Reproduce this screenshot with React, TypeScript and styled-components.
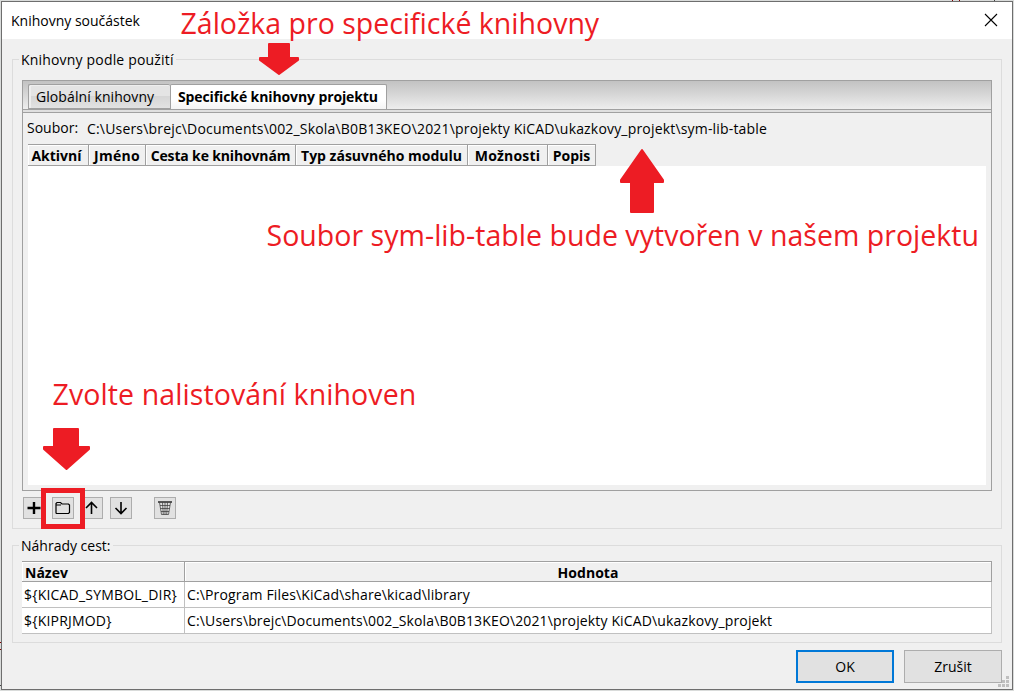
import React from "react";
import styled, { createGlobalStyle } from "styled-components";

const Global = createGlobalStyle`
  * { box-sizing: border-box; }
  body { margin: 0; background: #d9dbda; }
`;

const Desktop = styled.div`
  position: relative;
  width: 1014px;
  height: 691px;
  padding: 1px 1px 1px 1px;
  overflow: hidden;
  background: #d9dbda;
  font-family: "Open Sans", "Noto Sans", sans-serif;
  font-size: 14px;
  color: #000;
`;

const Dialog = styled.main`
  display: flex;
  flex-direction: column;
  width: 1012px;
  height: 689px;
  border: 1px solid #6e6e6e;
  background: #f0f0f0;
`;

const TitleBar = styled.header`
  display: flex;
  align-items: center;
  justify-content: space-between;
  flex: none;
  height: 37px;
  padding: 0 14px 0 9px;
  background: #fff;
`;

const Text = styled.span<{ $ls?: number }>`
  display: block;
  line-height: 20px;
  white-space: pre;
  letter-spacing: ${(p) => p.$ls ?? 0}px;
`;

const CloseButton = styled.button`
  display: flex;
  margin-top: -2px;
  padding: 0;
  border: 0;
  background: none;
`;

const Body = styled.div`
  display: flex;
  flex-direction: column;
  flex: 1;
  padding: 10px 10px 0;
`;

const Group = styled.fieldset<{ $height: number; $gap: number }>`
  flex: none;
  min-width: 0;
  height: ${(p) => p.$height}px;
  margin: 0 0 ${(p) => p.$gap}px;
  padding: ${(p) => (p.$gap ? 10 : 5)}px 9px 0;
  border: 1px solid #dcdcdc;
`;

const Legend = styled.legend`
  height: 21px;
  margin-left: -3px;
  padding: 1px 2px 0;
`;

const Notebook = styled.section`
  height: 411px;
  border: 1px solid #a0a0a0;
`;

const TabStrip = styled.div`
  display: flex;
  align-items: flex-end;
  height: 32px;
  padding: 0 0 3px 5px;
  border-bottom: 1px solid #a0a0a0;
  background: linear-gradient(#c2c2c2, #ededed 28px, #a0a0a0 28px, #a0a0a0 29px, #dfdfdf 29px);
`;

const Tab = styled.button<{ $active?: boolean; $width: number }>`
  width: ${(p) => p.$width}px;
  height: 25px;
  padding: 0 0 0 7px;
  border: 1px solid #a0a0a0;
  border-width: 1px ${(p) => (p.$active ? 1 : 0)}px ${(p) => (p.$active ? 0 : 1)}px 1px;
  border-radius: 2px 2px 0 0;
  background: ${(p) =>
    p.$active ? "linear-gradient(#fff 60%, #f4f4f4)" : "linear-gradient(#e4e4e4 50%, #d6d6d6 50%, #e2e2e2)"};
  box-shadow: ${(p) => (p.$active ? "none" : "inset 2px 1px 0 #eee")};
  font: inherit;
  font-weight: ${(p) => (p.$active ? 700 : 400)};
  text-align: left;
`;

const FileRow = styled.div`
  display: flex;
  height: 31px;
  padding: 5px 0 0 4px;
`;

const FileLabel = styled.div`
  width: 60px;
`;

const FilePath = styled.div`
  padding-top: 1px;
`;

const HeaderRow = styled.div`
  display: flex;
  height: 22px;
  margin: 0 5px;
`;

const HeaderCell = styled.div<{ $width: number; $trail?: number }>`
  display: flex;
  align-items: center;
  justify-content: center;
  width: ${(p) => p.$width}px;
  padding: 2px ${(p) => p.$trail ?? 0}px 0 0;
  border: 1px solid #a0a0a0;
  border-left: 0;
  box-shadow: inset 1px 1px 0 #fff;
  font-weight: 700;
`;

const GridArea = styled.div`
  height: 319px;
  margin: 0 5px;
  background: #fff;
`;

const Toolbar = styled.div`
  display: flex;
  gap: 7px;
  padding: 6px 0 0 1px;
`;

const ToolButton = styled.button<{ $after?: number }>`
  display: flex;
  width: 22px;
  height: 22px;
  margin: 0 ${(p) => p.$after ?? 0}px 0 0;
  padding: 0;
  border: 1px solid #adadad;
  background: #e1e1e1;
`;

const PathTable = styled.div`
  display: grid;
  grid-template-columns: 163px 807px;
  grid-template-rows: 20px 26px 26px;
  border-top: 1px solid #a0a0a0;
`;

const PathHead = styled.div<{ $center?: boolean }>`
  display: flex;
  align-items: center;
  justify-content: ${(p) => (p.$center ? "center" : "flex-start")};
  padding: ${(p) => (p.$center ? "3px 0 0" : "3px 0 0 3px")};
  border: solid #a0a0a0;
  border-width: 0 1px 1px 0;
  box-shadow: inset 1px 1px 0 #fff;
  font-weight: 700;
`;

const PathCell = styled.div`
  display: flex;
  align-items: center;
  padding-left: 2px;
  border: solid #c0c0c0;
  border-width: 0 1px 1px 0;
  background: #fff;
`;

const Footer = styled.footer`
  display: flex;
  justify-content: flex-end;
  gap: 10px;
  padding-top: 7px;
`;

const DialogButton = styled.button<{ $primary?: boolean }>`
  display: flex;
  align-items: center;
  justify-content: center;
  width: 98px;
  height: 33px;
  padding: 0;
  border: ${(p) => (p.$primary ? "2px solid #0078d7" : "1px solid #adadad")};
  background: #e1e1e1;
  font: inherit;
`;

const Grip = styled.svg`
  position: absolute;
  left: 998px;
  top: 676px;
`;

const Note = styled.div<{ $x: number; $y: number; $ls: number }>`
  position: absolute;
  left: ${(p) => p.$x}px;
  top: ${(p) => p.$y}px;
  font-family: "Open Sans", sans-serif;
  font-size: 28.5px;
  line-height: 38px;
  letter-spacing: ${(p) => p.$ls}px;
  white-space: pre;
  color: #ed1c24;
`;

const Marks = styled.svg`
  position: absolute;
  left: 0;
  top: 0;
  pointer-events: none;
`;

const Highlight = styled.div`
  position: absolute;
  left: 41px;
  top: 488px;
  width: 44px;
  height: 41px;
  border: 5px solid #ed1c24;
`;

const columns = [
  { name: "Aktivní", width: 61, ls: 0, trail: 3 },
  { name: "Jméno", width: 57, ls: 0.3 },
  { name: "Cesta ke knihovnám", width: 150, ls: -0.15 },
  { name: "Typ zásuvného modulu", width: 172, ls: 0 },
  { name: "Možnosti", width: 80, ls: 0.2 },
  { name: "Popis", width: 48, ls: 0 },
];

const tools = [
  { name: "Přidat", draw: <path d="M4.5 11h13M11 5v12" strokeWidth="2.4" /> },
  { name: "Složka", draw: <path d="M4 16V6.500L5 5.500h3.500l1.500 1.500h6.500l1 1V15.500l-1 1h-12zM4 8h5" strokeWidth="1.2" /> },
  { name: "Nahoru", draw: <path d="M10.500 17V5.500M5 11l5.500-5.500L16 11" strokeWidth="1.6" /> },
  { name: "Dolů", draw: <path d="M11 5V16.500M5.500 11l5.500 5.500 5.500-5.500" strokeWidth="1.6" />, after: 15 },
  {
    name: "Smazat",
    draw: (
      <g stroke="#333">
        <path d="M4 5h14" strokeWidth="1.6" />
        <path d="M5.500 5.500l2 12h7l2-12M8.500 5.500l.8 12M11 5.500v12M13.500 5.500l-.8 12M6 8.500h10M6.500 11.500h9M7 14.500h8" strokeWidth=".7" />
      </g>
    ),
  },
];

export default function App() {
  return (
    <Desktop>
      <Global />
      <Dialog>
        <TitleBar>
          <Text>Knihovny součástek</Text>
          <CloseButton aria-label="Zavřít">
            <svg width="14" height="14" viewBox="0 0 14 14" fill="none" stroke="#000" strokeWidth="1.1">
              <path d="M1 1l12 12M13 1L1 13" />
            </svg>
          </CloseButton>
        </TitleBar>
        <Body>
          <Group $height={480} $gap={6}>
            <Legend><Text $ls={0.18}>Knihovny podle použití</Text></Legend>
            <Notebook>
              <TabStrip>
                <Tab $width={142}><Text $ls={0.08}>Globální knihovny</Text></Tab>
                <Tab $active $width={217}><Text $ls={-0.11}>Specifické knihovny projektu</Text></Tab>
              </TabStrip>
              <FileRow>
                <FileLabel><Text>Soubor:</Text></FileLabel>
                <FilePath>
                  <Text $ls={0.18}>{"C:\\Users\\brejc\\Documents\\002_Skola\\B0B13KEO\\2021\\projekty KiCAD\\ukazkovy_projekt\\sym-lib-table"}</Text>
                </FilePath>
              </FileRow>
              <HeaderRow>
                {columns.map((c) => (
                  <HeaderCell key={c.name} $width={c.width} $trail={c.trail}><Text $ls={c.ls}>{c.name}</Text></HeaderCell>
                ))}
              </HeaderRow>
              <GridArea />
            </Notebook>
            <Toolbar>
              {tools.map((t) => (
                <ToolButton key={t.name} aria-label={t.name} $after={t.after}>
                  <svg width="20" height="20" viewBox="1 1 20 20" fill="none" stroke="#000">{t.draw}</svg>
                </ToolButton>
              ))}
            </Toolbar>
          </Group>
          <Group $height={108} $gap={0}>
            <Legend><Text>Náhrady cest:</Text></Legend>
            <PathTable>
              <PathHead><Text>Název</Text></PathHead>
              <PathHead $center><Text $ls={0.05}>Hodnota</Text></PathHead>
              <PathCell><Text $ls={0.2}>{"${KICAD_SYMBOL_DIR}"}</Text></PathCell>
              <PathCell><Text $ls={0.14}>{"C:\\Program Files\\KiCad\\share\\kicad\\library"}</Text></PathCell>
              <PathCell><Text $ls={0.2}>{"${KIPRJMOD}"}</Text></PathCell>
              <PathCell><Text $ls={0.14}>{"C:\\Users\\brejc\\Documents\\002_Skola\\B0B13KEO\\2021\\projekty KiCAD\\ukazkovy_projekt"}</Text></PathCell>
            </PathTable>
          </Group>
          <Footer>
            <DialogButton $primary><Text>OK</Text></DialogButton>
            <DialogButton><Text>Zrušit</Text></DialogButton>
          </Footer>
        </Body>
      </Dialog>
      <Grip width="11" height="11" fill="#bfbfbf">
        <path d="M8 0h3v3h-3zM4 4h3v3h-3zM8 4h3v3h-3zM0 8h3v3h-3zM4 8h3v3h-3zM8 8h3v3h-3z" />
      </Grip>
      <Note $x={180.5} $y={4} $ls={0}>Záložka pro specifické knihovny</Note>
      <Note $x={266.5} $y={216} $ls={0.03}>Soubor sym-lib-table bude vytvořen v našem projektu</Note>
      <Note $x={52.5} $y={375} $ls={0.1}>Zvolte nalistování knihoven</Note>
      <Marks width="1014" height="691" fill="#ed1c24" stroke="#ed1c24" strokeWidth="2" strokeLinejoin="round">
        <path d="M269 44h20v14h9v2l-19 14-19-14v-2h9z" />
        <path d="M642 150l21 30v2h-10v30h-22v-30h-10v-2z" />
        <path d="M54 429h24v18h11v2l-22.500 20-22.500-20v-2h10z" />
        <path d="M952.500 0v1M959.500 0v1M0 642.500h1M0 649.500h1" stroke="#840000" strokeWidth="1" />
        <path d="M994.500 0v1M0 685.500h1" stroke="#444" strokeWidth="1" />
      </Marks>
      <Highlight />
    </Desktop>
  );
}
